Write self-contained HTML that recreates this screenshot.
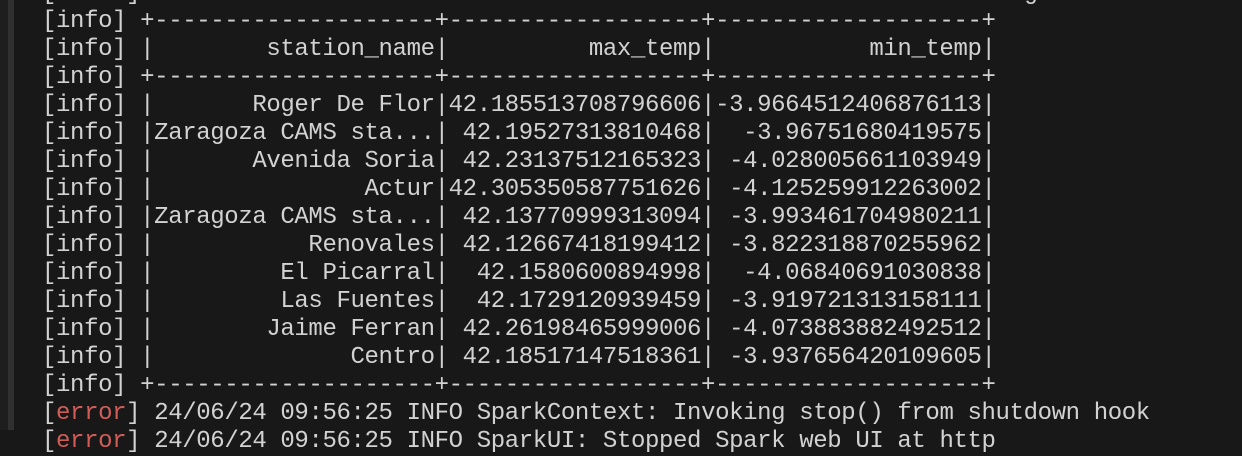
<!DOCTYPE html>
<html><head><meta charset="utf-8"><style>
html,body{margin:0;padding:0;width:1242px;height:430px;overflow:hidden;background:#181818;}
.g1{position:absolute;left:0;top:0;width:8px;height:430px;background:#1e1e1e;}
.g2{position:absolute;left:8px;top:0;width:6px;height:430px;background:#303030;}
pre{position:absolute;left:42px;top:-20px;margin:0;font-family:"Liberation Mono","DejaVu Sans Mono",monospace;font-size:24px;letter-spacing:-0.38px;line-height:28px;color:#d2d2d2;white-space:pre;}
.r{color:#d05c58;}
</style></head><body>
<div class="g1"></div><div class="g2"></div>
<pre>[<span class="r">error</span>] 24/06/24 09:56:25 INFO DAGScheduler: Job 2 finished: showString
[info] +--------------------+------------------+-------------------+
[info] |        station_name|          max_temp|           min_temp|
[info] +--------------------+------------------+-------------------+
[info] |       Roger De Flor|42.185513708796606|-3.9664512406876113|
[info] |Zaragoza CAMS sta...| 42.19527313810468|  -3.96751680419575|
[info] |       Avenida Soria| 42.23137512165323| -4.028005661103949|
[info] |               Actur|42.305350587751626| -4.125259912263002|
[info] |Zaragoza CAMS sta...| 42.13770999313094| -3.993461704980211|
[info] |           Renovales| 42.12667418199412| -3.822318870255962|
[info] |         El Picarral|  42.1580600894998|  -4.06840691030838|
[info] |         Las Fuentes|  42.1729120939459| -3.919721313158111|
[info] |        Jaime Ferran| 42.26198465999006| -4.073883882492512|
[info] |              Centro| 42.18517147518361| -3.937656420109605|
[info] +--------------------+------------------+-------------------+
[<span class="r">error</span>] 24/06/24 09:56:25 INFO SparkContext: Invoking stop() from shutdown hook
[<span class="r">error</span>] 24/06/24 09:56:25 INFO SparkUI: Stopped Spark web UI at http</pre>
</body></html>
